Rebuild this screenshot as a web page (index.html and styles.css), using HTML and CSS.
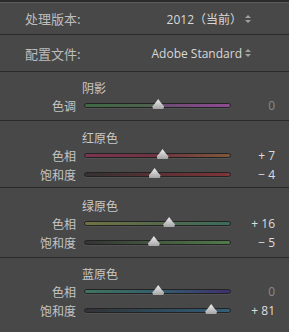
FILE: index.html
```html
<!DOCTYPE html>
<html lang="zh-CN">
<head>
  <meta charset="UTF-8">
  <title>相机校准</title>
  <link rel="stylesheet" href="styles.css">
</head>
<body>
  <div class="panel">
    <div class="topbar"></div>

    <!-- 处理版本 / 配置文件 -->
    <div class="setting setting-first">
      <span class="setting-label">处理版本:</span>
      <span class="setting-value">2012（当前）<span class="updown"></span></span>
    </div>
    <div class="setting setting-second">
      <span class="setting-label">配置文件:</span>
      <span class="setting-value">Adobe Standard<span class="updown"></span></span>
    </div>

    <!-- 阴影 -->
    <div class="group group-shadow">
      <div class="group-title">阴影</div>
      <div class="slider">
        <span class="slider-label">色调</span>
        <div class="track track-tint"><span class="thumb" style="left: 50.5%"></span></div>
        <span class="slider-value dim">0</span>
      </div>
    </div>

    <!-- 红原色 -->
    <div class="group group-red">
      <div class="group-title">红原色</div>
      <div class="slider">
        <span class="slider-label">色相</span>
        <div class="track track-red-hue"><span class="thumb" style="left: 53.5%"></span></div>
        <span class="slider-value">+ 7</span>
      </div>
      <div class="slider">
        <span class="slider-label">饱和度</span>
        <div class="track track-red-sat"><span class="thumb" style="left: 48%"></span></div>
        <span class="slider-value">− 4</span>
      </div>
    </div>

    <!-- 绿原色 -->
    <div class="group group-green">
      <div class="group-title">绿原色</div>
      <div class="slider">
        <span class="slider-label">色相</span>
        <div class="track track-green-hue"><span class="thumb" style="left: 58%"></span></div>
        <span class="slider-value">+ 16</span>
      </div>
      <div class="slider">
        <span class="slider-label">饱和度</span>
        <div class="track track-green-sat"><span class="thumb" style="left: 47.5%"></span></div>
        <span class="slider-value">− 5</span>
      </div>
    </div>

    <!-- 蓝原色 -->
    <div class="group group-blue">
      <div class="group-title">蓝原色</div>
      <div class="slider">
        <span class="slider-label">色相</span>
        <div class="track track-blue-hue"><span class="thumb" style="left: 50.5%"></span></div>
        <span class="slider-value dim">0</span>
      </div>
      <div class="slider">
        <span class="slider-label">饱和度</span>
        <div class="track track-blue-sat"><span class="thumb" style="left: 87%"></span></div>
        <span class="slider-value">+ 81</span>
      </div>
    </div>
  </div>
</body>
</html>
```

FILE: styles.css
```css
body {
  margin: 0;
  padding: 0;
  background-color: #484848;
  font-family: 'Open Sans', 'Noto Sans CJK SC', sans-serif;
  color: #c9c9c9;
  overflow: hidden;
}
.panel {
  width: 289px;
  height: 332px;
  background-color: #484848;
}
.topbar {
  height: 2px;
  background-color: #2a2a2a;
  border-bottom: 1px solid #5c5c5c;
}

/* rows at the top */
.setting {
  display: flex;
  align-items: center;
  justify-content: space-between;
  padding: 0 47px 0 25px;
  border-bottom: 1px solid #2b2b2b;
}
.setting-first {
  height: 31px;
}
.setting-second {
  height: 36px;
}
.setting-label {
  font-size: 13px;
  font-family: 'Noto Sans CJK SC', sans-serif;
  color: #bdbdbd;
}
.setting-value {
  position: relative;
  font-size: 12px;
  color: #d8d8d8;
}
.updown {
  position: absolute;
  right: -3px;
  top: 50%;
  width: 0;
  height: 0;
}
.updown::before,
.updown::after {
  content: '';
  position: absolute;
  left: 0;
  border-left: 3px solid transparent;
  border-right: 3px solid transparent;
}
.updown::before {
  top: -4px;
  border-bottom: 3px solid #a0a0a0;
}
.updown::after {
  top: 1px;
  border-top: 3px solid #a0a0a0;
}

/* slider groups */
.group {
  border-bottom: 1px solid #2b2b2b;
}
.group-shadow {
  padding: 8px 0 5px;
}
.group-red {
  padding: 9px 0 3px;
}
.group-green {
  padding: 10px 0 5px;
}
.group-blue {
  padding: 8px 0 6px;
  border-bottom: none;
}
.group-title {
  height: 16px;
  line-height: 16px;
  padding-left: 82px;
  font-size: 12px;
  font-family: 'Noto Sans CJK SC', sans-serif;
  color: #c8c8c8;
}
.slider {
  display: grid;
  grid-template-columns: 76px 147px 1fr;
  column-gap: 8px;
  align-items: center;
  height: 19px;
  padding-right: 14px;
}
.slider-label {
  text-align: right;
  font-size: 12px;
  font-family: 'Noto Sans CJK SC', sans-serif;
  color: #c4c4c4;
}
.slider-value {
  text-align: right;
  font-size: 12px;
  color: #dedede;
}
.slider-value.dim {
  color: #8a8a8a;
}

.track {
  position: relative;
  height: 3px;
  border: 1px solid #232323;
  border-radius: 3px;
  box-shadow: 0 1px 0 #525252;
}
.thumb {
  position: absolute;
  top: -5px;
  width: 12px;
  height: 10px;
  margin-left: -6px;
  background: linear-gradient(#efefef, #a4a4a4);
  clip-path: polygon(50% 0, 78% 45%, 100% 75%, 92% 100%, 8% 100%, 0 75%, 22% 45%);
}
.track-tint {
  background: linear-gradient(to right, #3f6a44, #506050 48%, #6c4c72 54%, #8e4c92);
}
.track-red-hue {
  background: linear-gradient(to right, #7c3450, #6e3442 50%, #7e5838);
}
.track-red-sat {
  background: linear-gradient(to right, #343232, #5a3034 50%, #803438);
}
.track-green-hue {
  background: linear-gradient(to right, #727240, #566a4c 50%, #3a6c5c);
}
.track-green-sat {
  background: linear-gradient(to right, #323432, #445a40 50%, #507a48);
}
.track-blue-hue {
  background: linear-gradient(to right, #407460, #345e6c 50%, #3e306e);
}
.track-blue-sat {
  background: linear-gradient(to right, #323234, #2e4a5a 50%, #345e78);
}
```
